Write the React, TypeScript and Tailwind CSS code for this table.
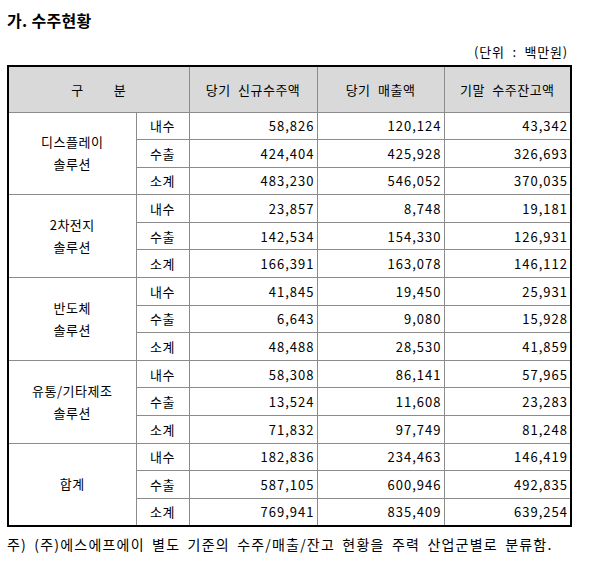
import React from 'react';

type Row = { label: string; a: string; b: string; c: string };
type Group = { name: string[]; rows: Row[] };

const groups: Group[] = [
  {
    name: ['디스플레이', '솔루션'],
    rows: [
      { label: '내수', a: '58,826', b: '120,124', c: '43,342' },
      { label: '수출', a: '424,404', b: '425,928', c: '326,693' },
      { label: '소계', a: '483,230', b: '546,052', c: '370,035' },
    ],
  },
  {
    name: ['2차전지', '솔루션'],
    rows: [
      { label: '내수', a: '23,857', b: '8,748', c: '19,181' },
      { label: '수출', a: '142,534', b: '154,330', c: '126,931' },
      { label: '소계', a: '166,391', b: '163,078', c: '146,112' },
    ],
  },
  {
    name: ['반도체', '솔루션'],
    rows: [
      { label: '내수', a: '41,845', b: '19,450', c: '25,931' },
      { label: '수출', a: '6,643', b: '9,080', c: '15,928' },
      { label: '소계', a: '48,488', b: '28,530', c: '41,859' },
    ],
  },
  {
    name: ['유통/기타제조', '솔루션'],
    rows: [
      { label: '내수', a: '58,308', b: '86,141', c: '57,965' },
      { label: '수출', a: '13,524', b: '11,608', c: '23,283' },
      { label: '소계', a: '71,832', b: '97,749', c: '81,248' },
    ],
  },
  {
    name: ['합계'],
    rows: [
      { label: '내수', a: '182,836', b: '234,463', c: '146,419' },
      { label: '수출', a: '587,105', b: '600,946', c: '492,835' },
      { label: '소계', a: '769,941', b: '835,409', c: '639,254' },
    ],
  },
];

const font = { fontFamily: '"Noto Sans CJK KR", "Noto Sans", sans-serif' };
const cell = 'border border-[#8c8c8c] p-0';
const num = `${cell} text-right pr-[2px] tracking-[1px]`;
const head = `${cell} font-normal text-center tracking-[0.5px] [word-spacing:4px]`;

export default function App() {
  return (
    <div className="w-[590px] h-[561px] bg-white text-black text-[13px] leading-none" style={font}>
      <div className="pl-[7px] pt-[12px] h-[38px] text-[16px] font-bold tracking-[0.3px]">가. 수주현황</div>
      <div className="w-[570px] h-[27px] flex items-center justify-end pr-[2px] tracking-[0.8px] [word-spacing:4px]">
        (단위 : 백만원)
      </div>
      <table className="ml-[7px] w-[563px] border-collapse border-2 border-black table-fixed">
        <colgroup>
          <col className="w-[128px]" />
          <col className="w-[53px]" />
          <col className="w-[128px]" />
          <col className="w-[127px]" />
          <col className="w-[127px]" />
        </colgroup>
        <thead>
          <tr className="h-[46px] bg-[#d9d9d9]">
            <th colSpan={2} className={head}>
              구<span className="inline-block w-[30px]" />분
            </th>
            <th className={head}>당기 신규수주액</th>
            <th className={head}>당기 매출액</th>
            <th className={head}>기말 수주잔고액</th>
          </tr>
        </thead>
        <tbody>
          {groups.map((g) =>
            g.rows.map((r, i) => (
              <tr key={g.name.join() + r.label} className="h-[27.6px]">
                {i === 0 && (
                  <td rowSpan={3} className={`${cell} text-center leading-[22px] tracking-[0.5px]`}>
                    {g.name.map((n) => (
                      <div key={n}>{n}</div>
                    ))}
                  </td>
                )}
                <td className={`${cell} text-center tracking-[0.5px]`}>{r.label}</td>
                <td className={num}>{r.a}</td>
                <td className={num}>{r.b}</td>
                <td className={num}>{r.c}</td>
              </tr>
            ))
          )}
        </tbody>
      </table>
      <div className="pl-[7px] pt-[10px] text-[14px] tracking-[1.2px] [word-spacing:3px]">
        주) (주)에스에프에이 별도 기준의 수주/매출/잔고 현황을 주력 산업군별로 분류함.
      </div>
    </div>
  );
}
